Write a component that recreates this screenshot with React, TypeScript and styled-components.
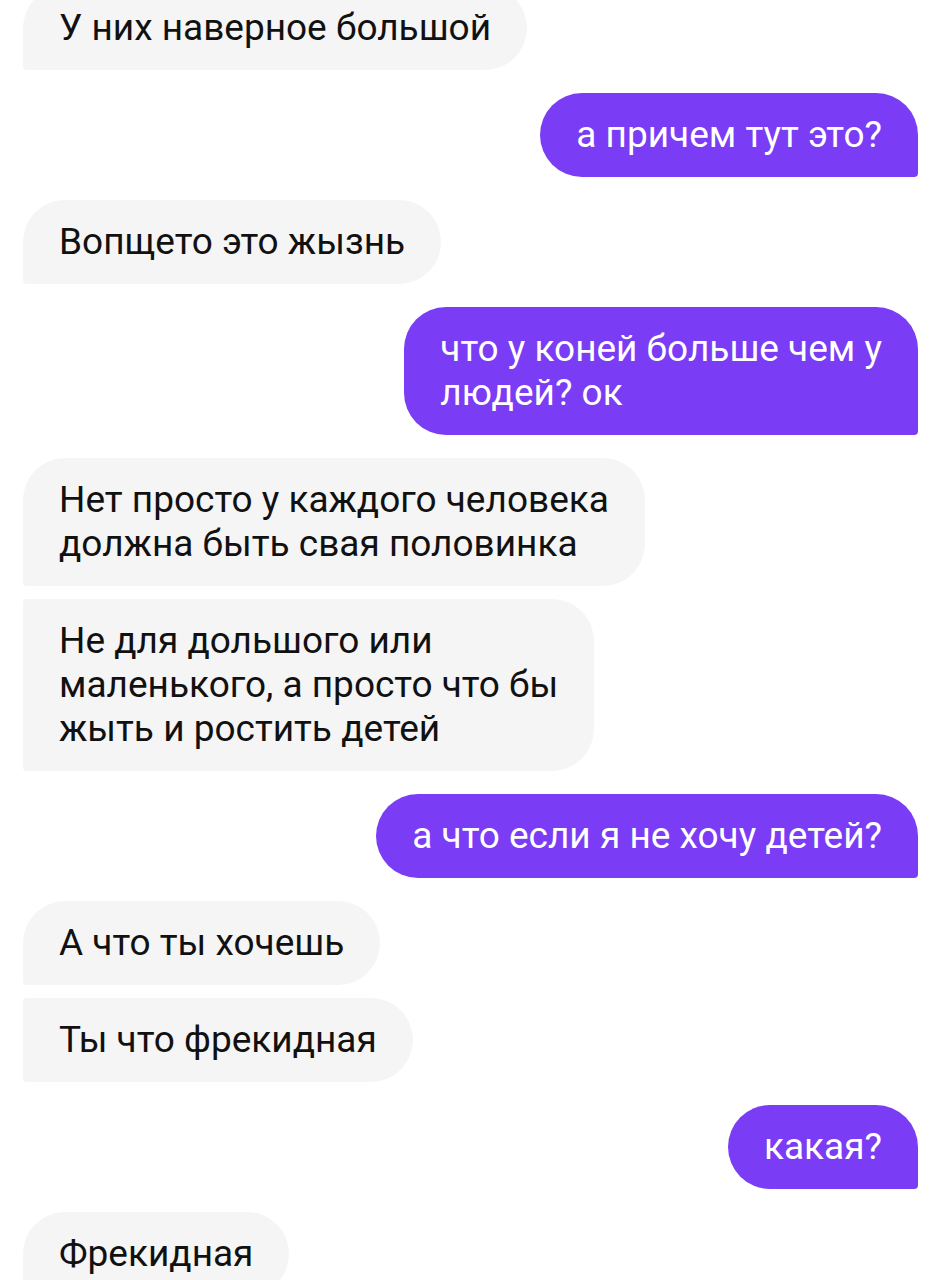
import React from "react";
import styled, { createGlobalStyle, css } from "styled-components";

const Global = createGlobalStyle`
  html, body {
    margin: 0;
    padding: 0;
    background: #ffffff;
  }
  body {
    font-family: Roboto, "Noto Sans", "Liberation Sans", sans-serif;
    -webkit-font-smoothing: antialiased;
  }
`;

const Chat = styled.div`
  display: flex;
  flex-direction: column;
  padding: 0 24px 0 23px;
  margin-top: -14px;
  height: 1294px;
  overflow: hidden;
  box-sizing: border-box;
`;

const Group = styled.div<{ $out?: boolean }>`
  display: flex;
  flex-direction: column;
  align-items: ${(p) => (p.$out ? "flex-end" : "flex-start")};
  gap: 13px;
  margin-bottom: 23px;
`;

const Bubble = styled.div<{ $out?: boolean; $first?: boolean }>`
  box-sizing: border-box;
  display: flex;
  flex-direction: column;
  padding: 20px 36px;
  font-size: 37px;
  line-height: 44px;
  white-space: nowrap;
  ${(p) =>
    p.$out
      ? css`
          background: #7a3cf4;
          color: #ffffff;
          border-radius: 42px 42px 4px 42px;
        `
      : css`
          background: #f5f5f5;
          color: #111111;
          border-radius: ${p.$first ? "42px" : "4px"} 42px 42px 4px;
        `}
`;

const Line = styled.span`
  display: block;
`;

type Msg = { out: boolean; bubbles: string[][] };

const messages: Msg[] = [
  { out: false, bubbles: [["У них наверное большой"]] },
  { out: true, bubbles: [["а причем тут это?"]] },
  { out: false, bubbles: [["Вопщето это жызнь"]] },
  { out: true, bubbles: [["что у коней больше чем у", "людей? ок"]] },
  {
    out: false,
    bubbles: [
      ["Нет просто у каждого человека", "должна быть свая половинка"],
      ["Не для дольшого или", "маленького, а просто что бы", "жыть и ростить детей"],
    ],
  },
  { out: true, bubbles: [["а что если я не хочу детей?"]] },
  { out: false, bubbles: [["А что ты хочешь"], ["Ты что фрекидная"]] },
  { out: true, bubbles: [["какая?"]] },
  { out: false, bubbles: [["Фрекидная"]] },
];

export default function App() {
  return (
    <>
      <Global />
      <Chat>
        {messages.map((m, i) => (
          <Group key={i} $out={m.out}>
            {m.bubbles.map((lines, j) => (
              <Bubble key={j} $out={m.out} $first={j === 0}>
                {lines.map((l, k) => (
                  <Line key={k}>{l}</Line>
                ))}
              </Bubble>
            ))}
          </Group>
        ))}
      </Chat>
    </>
  );
}
